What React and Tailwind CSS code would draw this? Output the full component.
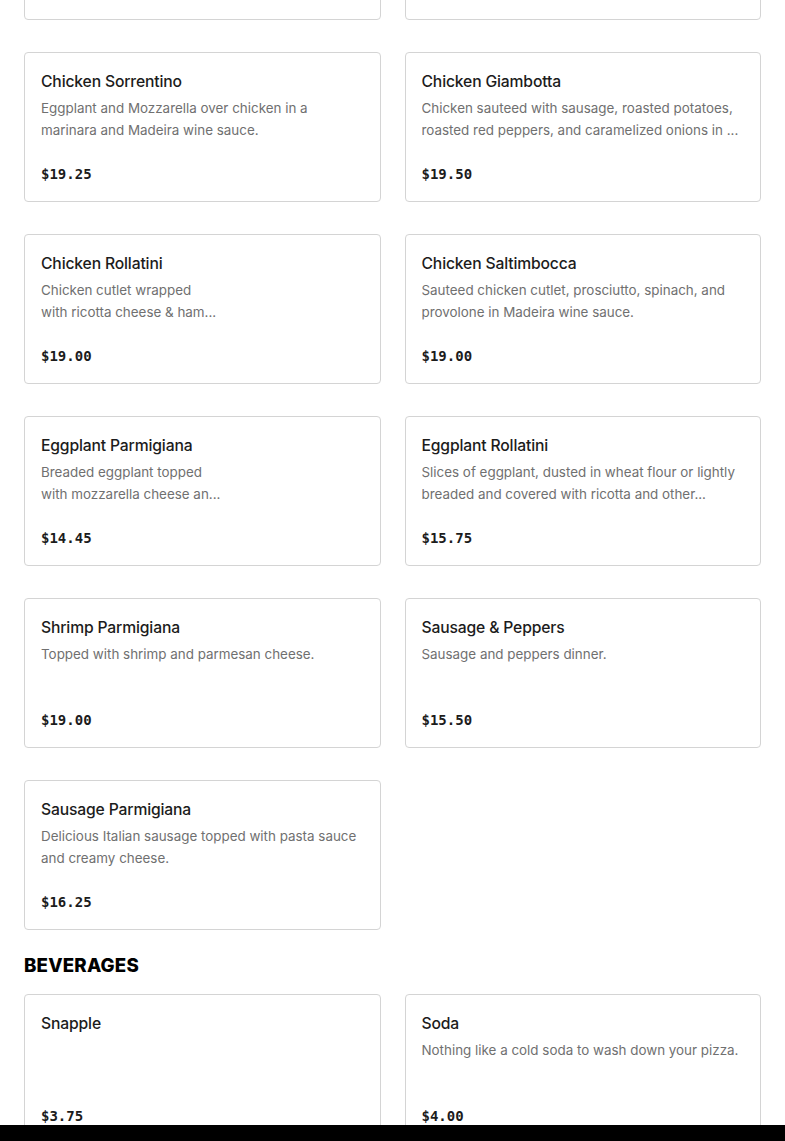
const entrees = [
  { name: 'Chicken Parmigiana', description: 'Breaded chicken cutlet topped with sauce and mozzarella.', price: '$17.50' },
  { name: 'Chicken Marsala', description: 'Chicken with mushrooms in a Marsala wine sauce.', price: '$18.50' },
  { name: 'Chicken Sorrentino', description: 'Eggplant and Mozzarella over chicken in a marinara and Madeira wine sauce.', price: '$19.25' },
  { name: 'Chicken Giambotta', description: 'Chicken sauteed with sausage, roasted potatoes, roasted red peppers, and caramelized onions in ...', price: '$19.50' },
  { name: 'Chicken Rollatini', description: 'Chicken cutlet wrapped\nwith ricotta cheese & ham...', price: '$19.00' },
  { name: 'Chicken Saltimbocca', description: 'Sauteed chicken cutlet, prosciutto, spinach, and provolone in Madeira wine sauce.', price: '$19.00' },
  { name: 'Eggplant Parmigiana', description: 'Breaded eggplant topped\nwith mozzarella cheese an...', price: '$14.45' },
  { name: 'Eggplant Rollatini', description: 'Slices of eggplant, dusted in wheat flour or lightly breaded and covered with ricotta and other...', price: '$15.75' },
  { name: 'Shrimp Parmigiana', description: 'Topped with shrimp and parmesan cheese.', price: '$19.00' },
  { name: 'Sausage & Peppers', description: 'Sausage and peppers dinner.', price: '$15.50' },
  { name: 'Sausage Parmigiana', description: 'Delicious Italian sausage topped with pasta sauce and creamy cheese.', price: '$16.25' },
];

const beverages = [
  { name: 'Snapple', description: '', price: '$3.75' },
  { name: 'Soda', description: 'Nothing like a cold soda to wash down your pizza.', price: '$4.00' },
];

function ItemCard({ item }) {
  return (
    <div className="h-[150px] flex flex-col rounded border border-[#d4d4d4] bg-white px-4 pt-[17px] pb-[15px]">
      <p className="text-[15.7px] leading-6 font-medium text-[#1c1c1c] font-['Inter',sans-serif] tracking-[-0.01em]">
        {item.name}
      </p>
      <p className="mt-[3px] text-[13.4px] leading-[22px] text-[#707070] font-['Inter',sans-serif] whitespace-pre-line line-clamp-2">
        {item.description}
      </p>
      <p className="mt-auto text-[14px] leading-6 font-bold text-[#1c1c1c] font-['DejaVu_Sans_Mono',monospace]">
        {item.price}
      </p>
    </div>
  );
}

export default function App() {
  return (
    <div className="min-h-screen bg-white px-6 pb-10">
      <div className="-mt-[130px] grid grid-cols-2 gap-x-6 gap-y-8">
        {entrees.map((item) => (
          <ItemCard key={item.name} item={item} />
        ))}
      </div>

      <h2 className="mt-[22px] mb-[14px] text-[18.7px] leading-7 font-extrabold text-black font-['Inter',sans-serif] tracking-[0.01em]">
        BEVERAGES
      </h2>
      <div className="grid grid-cols-2 gap-x-6 gap-y-8">
        {beverages.map((item) => (
          <ItemCard key={item.name} item={item} />
        ))}
      </div>

      <div className="fixed bottom-0 left-0 right-0 h-4 bg-black" />
    </div>
  );
}
